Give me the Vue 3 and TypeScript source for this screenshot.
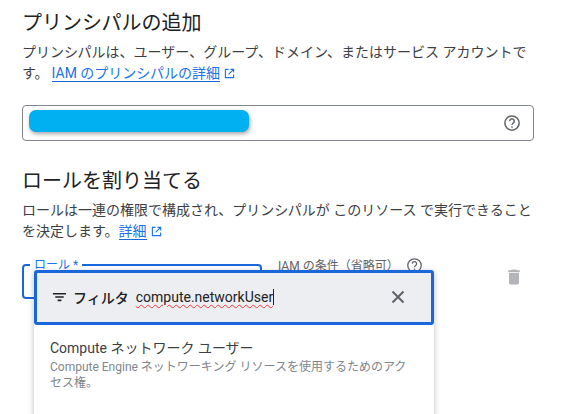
<template>
  <div class="page">
    <h2 class="title">プリンシパルの追加</h2>
    <p class="desc">
      プリンシパルは、ユーザー、グループ、ドメイン、またはサービス アカウントです。<a class="link">IAM のプリンシパルの詳細</a><svg class="ext" viewBox="0 0 12 12"><path d="M5 1.500H1.500v9h9V7M7 1.500h3.500V5M10.500 1.500L5 7" /></svg>
    </p>

    <div class="principal">
      <div class="redact"></div>
      <svg class="help" viewBox="0 0 24 24"><circle cx="12" cy="12" r="9.500" /><path d="M9 9.500a3 3 0 1 1 4.600 2.500c-1 .7-1.600 1.200-1.600 2.500" /><circle class="dot" cx="12" cy="17.400" r="1.100" /></svg>
    </div>

    <h2 class="title second">ロールを割り当てる</h2>
    <p class="desc">
      ロールは一連の権限で構成され、プリンシパルが このリソース で実行できることを決定します。<a class="link tight">詳細</a><svg class="ext" viewBox="0 0 12 12"><path d="M5 1.500H1.500v9h9V7M7 1.500h3.500V5M10.500 1.500L5 7" /></svg>
    </p>

    <div class="role-row">
      <div class="role-field">
        <span class="role-label">ロール *</span>
      </div>
      <div class="cond">
        <span class="cond-text">IAM の条件（省略可）</span>
        <svg class="help small" viewBox="0 0 24 24"><circle cx="12" cy="12" r="9.500" /><path d="M9 9.500a3 3 0 1 1 4.600 2.500c-1 .7-1.600 1.200-1.600 2.500" /><circle class="dot" cx="12" cy="17.400" r="1.100" /></svg>
      </div>
      <svg class="trash" viewBox="0 0 24 24"><path d="M6 19c0 1.100.9 2 2 2h8c1.100 0 2-.9 2-2V7H6v12zM19 4h-3.500l-1-1h-5l-1 1H5v2h14V4z" /></svg>

      <div class="dropdown">
        <div class="filter">
          <svg class="filter-icon" viewBox="0 0 16 12"><path d="M1 2.500h14M3.500 6h9M6 9.500h4" /></svg>
          <span class="filter-label">フィルタ</span>
          <span class="filter-value"><span class="typed">compute.networkUser</span></span>
          <svg class="close" viewBox="0 0 14 14"><path d="M1.500 1.500l11 11M12.500 1.500l-11 11" /></svg>
        </div>
        <div class="option">
          <div class="option-name">Compute ネットワーク ユーザー</div>
          <div class="option-desc">Compute Engine ネットワーキング リソースを使用するためのアクセス権。</div>
        </div>
      </div>
    </div>
  </div>
</template>

<script setup lang="ts">
</script>

<style>
html,
body {
  margin: 0;
  background: #fff;
  overflow: hidden;
}
</style>

<style scoped>
.page {
  width: 512px;
  height: 414px;
  padding: 9px 35px 0 22px;
  overflow: hidden;
  font-family: Roboto, "Noto Sans CJK JP", sans-serif;
  color: #3c4043;
}

.title {
  margin: 0;
  font-size: 20px;
  line-height: 28px;
  font-weight: 400;
  color: #202124;
}

.second {
  margin-top: 26px;
}

.desc {
  margin: 5px 0 0;
  font-size: 14px;
  line-height: 21px;
}

.link {
  color: #1a73e8;
  border-bottom: 1px solid #1967d2;
  margin-left: 3px;
}

.tight {
  margin-left: 0;
}

.ext {
  width: 11px;
  height: 11px;
  margin-left: 4px;
  vertical-align: -1px;
  fill: none;
  stroke: #1a73e8;
  stroke-width: 1.200;
}

.principal {
  position: relative;
  display: flex;
  justify-content: flex-end;
  align-items: center;
  box-sizing: border-box;
  height: 36px;
  margin-top: 21px;
  padding-right: 12px;
  border: 1px solid #80868b;
  border-radius: 4px;
}

.redact {
  position: absolute;
  left: 6px;
  top: 4px;
  width: 220px;
  height: 22px;
  border-radius: 7px;
  background: #00b0f0;
  box-shadow: 1px 2px 4px rgba(0, 0, 0, 0.35);
}

.help {
  width: 18px;
  height: 18px;
  fill: none;
  stroke: #5f6368;
  stroke-width: 2;
}

.help .dot {
  fill: #5f6368;
  stroke: none;
}

.role-row {
  position: relative;
  display: flex;
  align-items: flex-start;
  margin-top: 22px;
}

.role-field {
  position: relative;
  box-sizing: border-box;
  width: 240px;
  height: 35px;
  border: 2px solid #1a67dc;
  border-radius: 4px;
}

.role-label {
  position: absolute;
  left: 6px;
  top: -9px;
  padding: 0 4px;
  background: #fff;
  font-size: 12px;
  line-height: 16px;
  color: #1a73e8;
}

.cond {
  display: flex;
  align-items: flex-start;
  gap: 7px;
  margin-left: 16px;
  margin-top: -7px;
  font-size: 12px;
  line-height: 16px;
  color: #5f6368;
}

.cond-text {
  margin-top: 1px;
}

.small {
  width: 17px;
  height: 17px;
  stroke-width: 1.800;
}

.trash {
  position: absolute;
  left: 482px;
  top: 3px;
  width: 20px;
  height: 20px;
  fill: #b3b5b8;
}

.dropdown {
  position: absolute;
  left: 12px;
  top: 6px;
  width: 400px;
  height: 200px;
  background: #fff;
  box-shadow: 0 2px 6px rgba(60, 64, 67, 0.35);
}

.filter {
  display: flex;
  align-items: center;
  box-sizing: border-box;
  height: 55px;
  padding: 0 26px 2px 15px;
  background: #eceef2;
  border: 3px solid #1a67dc;
  border-radius: 3px;
}

.filter-icon {
  width: 15px;
  height: 12px;
  fill: none;
  stroke: #202124;
  stroke-width: 1.800;
}

.filter-label {
  margin-left: 6px;
  font-size: 14px;
  font-weight: 500;
  color: #202124;
}

.filter-value {
  flex: 1;
  margin-left: 7px;
  font-size: 14px;
  color: #202124;
}

.typed {
  border-right: 1px solid #202124;
  text-decoration: underline wavy #ee3b3b 1px;
  text-underline-offset: 2px;
}

.close {
  width: 14px;
  height: 14px;
  fill: none;
  stroke: #5f6368;
  stroke-width: 2;
}

.option {
  padding: 13px 20px 0 16px;
}

.option-name {
  font-size: 14px;
  line-height: 20px;
  color: #3c4043;
}

.option-desc {
  margin-top: 1px;
  font-size: 12px;
  line-height: 16px;
  color: #80868b;
}
</style>
